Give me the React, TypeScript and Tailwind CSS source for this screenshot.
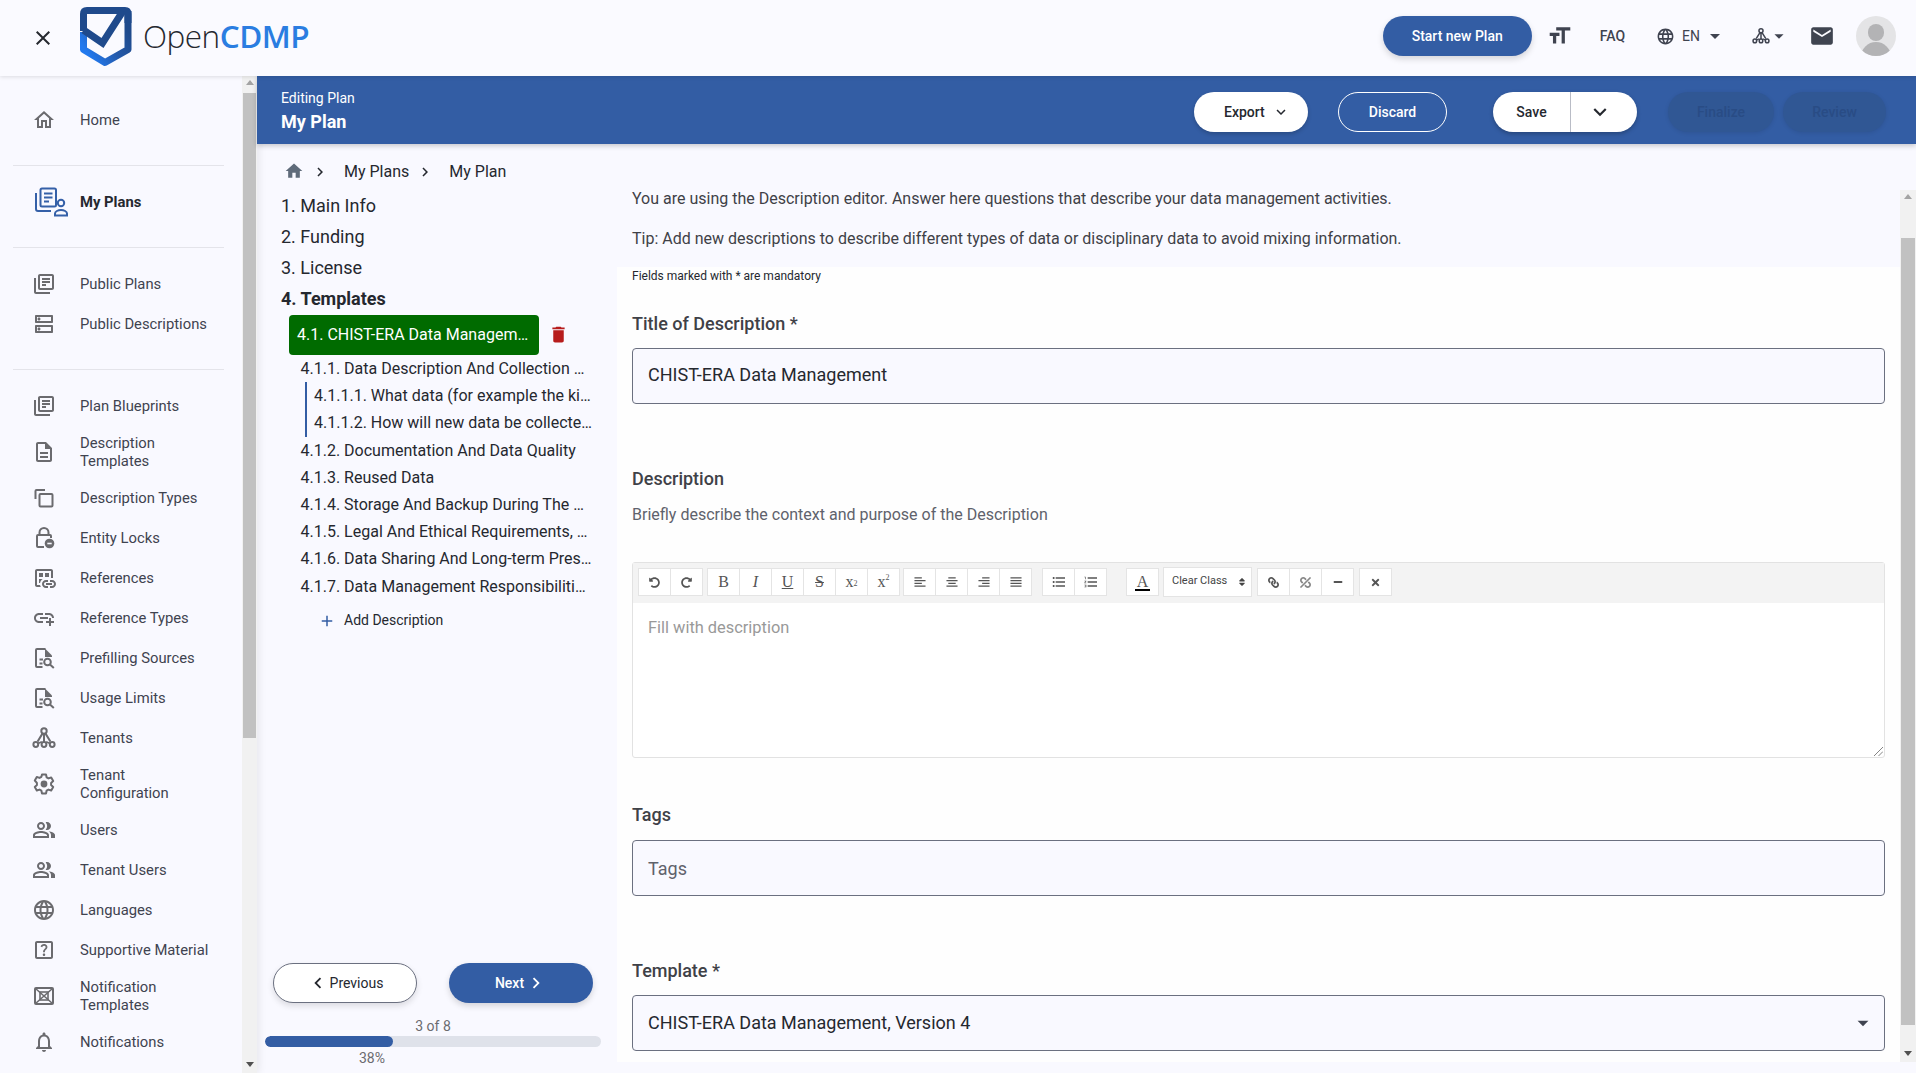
import React from 'react'
import {
  MdClose, MdTextFields, MdLanguage, MdArrowDropDown, MdEmail, MdHome, MdChevronRight, MdChevronLeft,
  MdKeyboardArrowDown, MdDelete, MdAdd, MdOutlineHome, MdOutlineLibraryBooks, MdOutlineDns, MdOutlineDescription,
  MdOutlineDatasetLinked, MdOutlineAddLink, MdOutlinePeopleAlt, MdOutlineNotifications,
  MdOutlineHelpCenter, MdFormatListBulleted, MdFormatListNumbered,
} from 'react-icons/md'
import { FaLink, FaUnlink, FaTimes, FaMinus, FaUndoAlt, FaRedoAlt, FaSort } from 'react-icons/fa'

function Logo() {
  return (
    <svg viewBox="0 -2 70 76" className="h-[76px] w-[70px] shrink-0">
      <defs>
        <linearGradient id="lg" x1="0.1" y1="0.85" x2="0.9" y2="0.25">
          <stop offset="0" stopColor="#2279ee" />
          <stop offset="0.55" stopColor="#2458a8" />
          <stop offset="1" stopColor="#1f4a8c" />
        </linearGradient>
      </defs>
      <path d="M8.5 31V48.5L30 61.5L53 48.5V10" fill="none" stroke="url(#lg)" strokeWidth="7" strokeLinejoin="round" />
      <path d="M8.5 30V13Q8.5 9.5 12 9.5H50Q53 9.5 53 13V22" fill="none" stroke="#1f4a8c" strokeWidth="7" />
      <path d="M8.5 29L27.5 42L48 10" fill="none" stroke="#1f4a8c" strokeWidth="7" />
    </svg>
  )
}

function Tenancy({ className = '' }: { className?: string }) {
  return (
    <svg viewBox="0 0 24 24" className={className} fill="none" stroke="currentColor" strokeWidth="2">
      <circle cx="12" cy="5" r="2.7" />
      <circle cx="3.8" cy="18.5" r="2.4" />
      <circle cx="12" cy="18.5" r="2.4" />
      <circle cx="20.2" cy="18.5" r="2.4" />
      <path d="M10.6 7.4L5.6 15.5M12 8V16M13.4 7.4L18.4 15.5" />
      <path d="M6 17.5L9.8 15.7M18 17.5L14.2 15.7" strokeWidth="1.6" />
    </svg>
  )
}

function LockMinus({ className = '' }: { className?: string }) {
  return (
    <svg viewBox="0 0 24 24" className={className} fill="none" stroke="currentColor" strokeWidth="2">
      <path d="M7.5 9V6.5a4.5 4.5 0 0 1 9 0V9" />
      <path d="M12 21H6a1 1 0 0 1-1-1V10a1 1 0 0 1 1-1h12a1 1 0 0 1 1 1v2" />
      <circle cx="17.5" cy="17.5" r="4.8" fill="currentColor" stroke="none" />
      <path d="M15.3 17.5H19.7" stroke="#f9f9ff" strokeWidth="1.6" />
    </svg>
  )
}

function DocSearch({ className = '' }: { className?: string }) {
  return (
    <svg viewBox="0 0 24 24" className={className} fill="none" stroke="currentColor" strokeWidth="2">
      <path d="M10.5 21H5a1 1 0 0 1-1-1V4a1 1 0 0 1 1-1h8.5" />
      <path d="M13 2.5L20 9.5V11H13Z" fill="currentColor" stroke="none" />
      <path d="M7.5 13.5H11M7.5 17.5H10.5" />
      <circle cx="15.5" cy="16" r="3.3" />
      <path d="M18 18.5L21.8 22" />
    </svg>
  )
}

function Gear({ className = '' }: { className?: string }) {
  return (
    <svg viewBox="0 0 24 24" className={className} fill="none" stroke="currentColor" strokeWidth="2" strokeLinejoin="round">
      <path d="M10 2.5h4l.6 2.8 1.9 1.1 2.7-.9 2 3.5-2.1 1.9v2.2l2.1 1.9-2 3.5-2.7-.9-1.9 1.1-.6 2.8h-4l-.6-2.8-1.9-1.1-2.7.9-2-3.5 2.1-1.9v-2.2L2.8 8.5l2-3.5 2.7.9 1.9-1.1z" />
      <circle cx="12" cy="12" r="3.4" fill="currentColor" stroke="none" />
    </svg>
  )
}

function TemplateBox({ className = '' }: { className?: string }) {
  return (
    <svg viewBox="0 0 24 24" className={className} fill="none" stroke="currentColor" strokeWidth="2">
      <rect x="3" y="4" width="18" height="16" rx="1" />
      <path d="M3.5 4.5L20.5 19.5M20.5 4.5L3.5 19.5" strokeWidth="1.6" />
      <rect x="8" y="8" width="8" height="8" strokeWidth="1.6" />
    </svg>
  )
}

function CopyBox({ className = '' }: { className?: string }) {
  return (
    <svg viewBox="0 0 24 24" className={className} fill="none" stroke="currentColor" strokeWidth="2">
      <path d="M3.5 13V5a1 1 0 0 1 1-1H13" />
      <rect x="7.5" y="8" width="13" height="12.5" rx="1" />
    </svg>
  )
}

function MyPlansIcon() {
  return (
    <svg viewBox="0 0 36 30" className="h-[30px] w-[36px] shrink-0 text-[#3560a8]" fill="none" stroke="currentColor" strokeWidth="2">
      <path d="M2 6V22a2 2 0 0 0 2 2H17" />
      <rect x="6.5" y="1.5" width="15.5" height="18" rx="1.5" />
      <path d="M10 6.5H18.5M10 10.5H18.5M10 14.5H15" />
      <circle cx="27" cy="16" r="3.2" />
      <path d="M21 28.5V26.5c0-2 3-3.5 6-3.5s6 1.5 6 3.5V28.5Z" />
    </svg>
  )
}

const ICON = 'h-[24px] w-[24px] shrink-0'

function NavItem({ Icon, text, tall }: { Icon: React.ComponentType<{ className?: string }>; text: React.ReactNode; tall?: boolean }) {
  return (
    <li className={`flex items-center pl-[32px] text-[14.8px] leading-[18px] text-[#3f4350] ${tall ? 'h-[52px]' : 'h-[40px]'}`}>
      <Icon className={`${ICON} text-[#6b6b6f]`} />
      <span className="ml-[24px]">{text}</span>
    </li>
  )
}

function Divider() {
  return <div className="ml-[13px] w-[211px] border-t border-[#e4e4ea]" />
}

function Sidebar() {
  return (
    <aside className="z-10 flex w-[257px] shrink-0 shadow-[2px_0_8px_rgba(0,0,0,0.08)]">
      <nav className="w-[242px] overflow-hidden pt-[24px]">
        <ul className="pb-[25px]">
          <NavItem Icon={MdOutlineHome} text="Home" />
        </ul>
        <Divider />
        <ul className="pb-[25px] pt-[16px]">
          <li className="flex h-[40px] items-center pl-[34px] text-[14.8px] font-bold text-[#25282f]">
            <MyPlansIcon />
            <span className="ml-[10px]">My Plans</span>
          </li>
        </ul>
        <Divider />
        <ul className="pb-[25px] pt-[16px]">
          <NavItem Icon={MdOutlineLibraryBooks} text="Public Plans" />
          <NavItem Icon={MdOutlineDns} text="Public Descriptions" />
        </ul>
        <Divider />
        <ul className="pt-[16px]">
          <NavItem Icon={MdOutlineLibraryBooks} text="Plan Blueprints" />
          <NavItem Icon={MdOutlineDescription} text={<>Description<br />Templates</>} tall />
          <NavItem Icon={CopyBox} text="Description Types" />
          <NavItem Icon={LockMinus} text="Entity Locks" />
          <NavItem Icon={MdOutlineDatasetLinked} text="References" />
          <NavItem Icon={MdOutlineAddLink} text="Reference Types" />
          <NavItem Icon={DocSearch} text="Prefilling Sources" />
          <NavItem Icon={DocSearch} text="Usage Limits" />
          <NavItem Icon={Tenancy} text="Tenants" />
          <NavItem Icon={Gear} text={<>Tenant<br />Configuration</>} tall />
          <NavItem Icon={MdOutlinePeopleAlt} text="Users" />
          <NavItem Icon={MdOutlinePeopleAlt} text="Tenant Users" />
          <NavItem Icon={MdLanguage} text="Languages" />
          <NavItem Icon={MdOutlineHelpCenter} text="Supportive Material" />
          <NavItem Icon={TemplateBox} text={<>Notification<br />Templates</>} tall />
          <NavItem Icon={MdOutlineNotifications} text="Notifications" />
        </ul>
      </nav>
      <Scrollbar thumbTop={7} thumbHeight={645} width="w-[15px]" />
    </aside>
  )
}

function Scrollbar({ thumbTop, thumbHeight, width }: { thumbTop: number; thumbHeight: number; width: string }) {
  return (
    <div className={`relative flex ${width} shrink-0 flex-col items-center bg-[#f1f1f1]`}>
      <span className="mt-[4px] h-0 w-0 border-x-[4px] border-b-[5px] border-x-transparent border-b-[#a3a3a3]" />
      <div className="absolute inset-x-[1px] bg-[#c1c1c1]" style={{ top: thumbTop + 10, height: thumbHeight }} />
      <span className="mb-[6px] mt-auto h-0 w-0 border-x-[4px] border-t-[5px] border-x-transparent border-t-[#505050]" />
    </div>
  )
}

function TopBar() {
  return (
    <header className="z-20 flex h-[76px] shrink-0 items-center bg-[#fafaff] shadow-[0_1px_4px_rgba(0,0,0,0.12)]">
      <MdClose className="ml-[31px] h-[24px] w-[24px] text-[#25282f]" />
      <div className="-mt-[3px] ml-[20px]"><Logo /></div>
      <span className="-mt-[4px] ml-[-2px] text-[31.5px] tracking-[-0.5px] font-['Open_Sans',sans-serif] font-light text-[#25282f]">
        Open<span className="font-semibold text-[#2a7de1]">CDMP</span>
      </span>
      <div className="-mt-[4px] ml-auto flex items-center pr-[20px] text-[14px] font-medium text-[#3f4350]">
        <button className="h-[40px] w-[149px] rounded-[20px] bg-[#335da4] text-white shadow-[0_3px_6px_rgba(0,0,0,0.15)]">Start new Plan</button>
        <MdTextFields className="ml-[15px] h-[26px] w-[26px] -scale-x-100 text-[#3f4350]" />
        <span className="ml-[27px]">FAQ</span>
        <MdLanguage className="ml-[31px] h-[19px] w-[19px]" />
        <span className="ml-[7px] font-normal">EN</span>
        <MdArrowDropDown className="ml-[3px] h-[24px] w-[24px]" />
        <Tenancy className="ml-[25px] h-[18px] w-[18px]" />
        <MdArrowDropDown className="-ml-[2px] h-[22px] w-[22px]" />
        <MdEmail className="ml-[19px] h-[26px] w-[26px] text-[#3f4450]" />
        <div className="relative ml-[21px] h-[40px] w-[40px] overflow-hidden rounded-full bg-[#e4e4e6]">
          <div className="absolute left-[12px] top-[8px] h-[17px] w-[16px] rounded-full bg-[#b3b3b5]" />
          <div className="absolute left-[5px] top-[26px] h-[24px] w-[30px] rounded-t-full bg-[#b3b3b5]" />
        </div>
      </div>
    </header>
  )
}

function PlanBar() {
  return (
    <div className="z-10 flex h-[68px] shrink-0 items-center bg-[#335da4] pl-[24px] pr-[30px] shadow-[0_2px_5px_rgba(0,0,0,0.2)]">
      <div className="text-white">
        <div className="text-[14px] leading-[20px]">Editing Plan</div>
        <div className="mt-[3px] text-[18px] font-bold leading-[22px]">My Plan</div>
      </div>
      <div className="ml-auto mt-[4px] flex items-center text-[14px] font-medium">
        <button className="flex h-[40px] w-[114px] items-center rounded-[20px] bg-white pl-[30px] text-[#25282f] shadow-[0_2px_4px_rgba(0,0,0,0.2)]">
          Export<MdKeyboardArrowDown className="ml-[7px] h-[18px] w-[18px]" />
        </button>
        <button className="ml-[30px] h-[40px] w-[109px] rounded-[20px] border border-white text-white">Discard</button>
        <div className="ml-[46px] flex h-[40px] w-[144px] items-center rounded-[20px] bg-white text-[#25282f] shadow-[0_2px_4px_rgba(0,0,0,0.25)]">
          <span className="flex h-full w-[78px] items-center justify-center border-r border-[#b9bcc6]">Save</span>
          <MdKeyboardArrowDown className="ml-[16px] h-[26px] w-[26px]" />
        </div>
        <button className="ml-[31px] h-[40px] w-[106px] rounded-[20px] bg-[#305794] text-[#294c85] shadow-[0_1px_4px_rgba(0,0,0,0.1)]">Finalize</button>
        <button className="ml-[9px] h-[40px] w-[103px] rounded-[20px] bg-[#305794] text-[#294c85] shadow-[0_1px_4px_rgba(0,0,0,0.1)]">Review</button>
      </div>
    </div>
  )
}

function SubItem({ text, indent }: { text: string; indent?: boolean }) {
  return (
    <div className={`h-[27.2px] whitespace-nowrap text-[16px] leading-[27.2px] text-[#25282f] ${indent ? 'pl-[7px]' : ''}`}>{text}</div>
  )
}

function StepPane() {
  return (
    <section className="flex w-[360px] shrink-0 flex-col pl-[24px]">
      <div className="mt-[16px] flex h-[24px] items-center text-[16px] text-[#25282f]">
        <MdHome className="ml-[3px] -mt-[2px] h-[20px] w-[20px] text-[#5f6b7a]" />
        <MdChevronRight className="ml-[7px] h-[18px] w-[18px]" />
        <span className="ml-[15px]">My Plans</span>
        <MdChevronRight className="ml-[7px] h-[18px] w-[18px]" />
        <span className="ml-[15px]">My Plan</span>
      </div>
      <ol className="mt-[6px] text-[18px] leading-[31px] text-[#25282f]">
        <li>1. Main Info</li>
        <li>2. Funding</li>
        <li>3. License</li>
        <li className="font-bold">4. Templates</li>
      </ol>
      <div className="ml-[8px] mt-[1px] flex items-center">
        <div className="flex h-[40px] w-[250px] items-center rounded-[4px] bg-[#006b00] pl-[8px] text-[16px] whitespace-nowrap text-white">4.1. CHIST-ERA Data Managem…</div>
        <MdDelete className="ml-[9px] -mt-[1px] h-[21px] w-[21px] text-[#b71c1c]" />
      </div>
      <div className="ml-[19.5px]">
        <SubItem text="4.1.1. Data Description And Collection …" />
        <div className="ml-[4.5px] border-l-2 border-[#335da4]">
          <SubItem indent text="4.1.1.1. What data (for example the ki…" />
          <SubItem indent text="4.1.1.2. How will new data be collecte…" />
        </div>
        <SubItem text="4.1.2. Documentation And Data Quality" />
        <SubItem text="4.1.3. Reused Data" />
        <SubItem text="4.1.4. Storage And Backup During The …" />
        <SubItem text="4.1.5. Legal And Ethical Requirements, …" />
        <SubItem text="4.1.6. Data Sharing And Long-term Pres…" />
        <SubItem text="4.1.7. Data Management Responsibiliti…" />
      </div>
      <div className="ml-[37px] mt-[9px] flex h-[24px] items-center text-[14px] text-[#25282f]">
        <MdAdd className="h-[18px] w-[18px] text-[#335da4]" />
        <span className="ml-[8px]">Add Description</span>
      </div>
      <div className="mt-auto flex">
        <button className="-ml-[8px] flex h-[40px] w-[144px] items-center justify-center rounded-[20px] border border-[#6b7080] bg-white text-[14px] text-[#25282f] shadow-[0_3px_6px_rgba(0,0,0,0.12)]">
          <MdChevronLeft className="mr-[1px] h-[22px] w-[22px]" />Previous
        </button>
        <button className="ml-[32px] flex h-[40px] w-[144px] items-center justify-center rounded-[20px] bg-[#335da4] text-[14px] font-medium text-white shadow-[0_3px_6px_rgba(0,0,0,0.15)]">
          Next<MdChevronRight className="ml-[1px] h-[22px] w-[22px]" />
        </button>
      </div>
      <div className="mt-[14px] w-[336px] -translate-x-[16px] text-center text-[14px] leading-[18px] text-[#6b6b6f]">3 of 8</div>
      <div className="mt-[1px] h-[11px] w-[336px] -translate-x-[16px] overflow-hidden rounded-[6px] bg-[#dfe2ea]">
        <div className="h-full rounded-[6px] bg-[#335da4]" style={{ width: '38%' }} />
      </div>
      <div className="mb-[6px] mt-[2px] w-[120px] -translate-x-[16px] text-right text-[14px] leading-[18px] text-[#6b6b6f]">38%</div>
    </section>
  )
}

function ToolBtn({ children, className = '' }: { children?: React.ReactNode; className?: string }) {
  return (
    <span className={`-ml-px flex h-[28px] w-[33px] items-center justify-center border border-[#e4e4e4] bg-white text-[#555] first:ml-0 ${className}`}>
      {children}
    </span>
  )
}

function AlignIcon({ kind }: { kind: 'left' | 'center' | 'right' | 'full' }) {
  const s = {
    left: 'M1 2H9M1 5H13M1 8H9M1 11H13',
    center: 'M3 2H11M1 5H13M3 8H11M1 11H13',
    right: 'M5 2H13M1 5H13M5 8H13M1 11H13',
    full: 'M1 2H13M1 5H13M1 8H13M1 11H13',
  }[kind]
  return (
    <svg viewBox="0 0 14 13" className="h-[12px] w-[14px]" stroke="currentColor" strokeWidth="1.4" fill="none">
      <path d={s} />
    </svg>
  )
}

function Editor() {
  const serif = "font-['Liberation_Serif',serif] text-[16px]"
  return (
    <div className="mt-[35px] h-[196px] rounded-[3px] border border-[#e2e2e2] bg-white">
      <div className="flex h-[40px] items-center bg-[#f3f3f3] pb-[2px] pl-[5px] text-[13px]">
        <div className="flex">
          <ToolBtn><FaUndoAlt className="h-[11px] w-[11px]" /></ToolBtn>
          <ToolBtn><FaRedoAlt className="h-[11px] w-[11px]" /></ToolBtn>
        </div>
        <div className="ml-[4px] flex">
          <ToolBtn className={serif}>B</ToolBtn>
          <ToolBtn className={`${serif} italic`}>I</ToolBtn>
          <ToolBtn className={`${serif} underline`}>U</ToolBtn>
          <ToolBtn className={`${serif} line-through`}>S</ToolBtn>
          <ToolBtn className={`${serif} text-[14px]`}>x<sub className="text-[8px]">2</sub></ToolBtn>
          <ToolBtn className={`${serif} text-[14px]`}>x<sup className="text-[8px]">2</sup></ToolBtn>
        </div>
        <div className="ml-[3px] flex">
          <ToolBtn><AlignIcon kind="left" /></ToolBtn>
          <ToolBtn><AlignIcon kind="center" /></ToolBtn>
          <ToolBtn><AlignIcon kind="right" /></ToolBtn>
          <ToolBtn><AlignIcon kind="full" /></ToolBtn>
        </div>
        <div className="ml-[10px] flex">
          <ToolBtn><MdFormatListBulleted className="h-[16px] w-[16px]" /></ToolBtn>
          <ToolBtn><MdFormatListNumbered className="h-[16px] w-[16px]" /></ToolBtn>
        </div>
        <div className="ml-[19px] flex">
          <ToolBtn className={serif}>
            <span className="border-b-2 border-black px-[2px] leading-[15px]">A</span>
          </ToolBtn>
        </div>
        <span className="ml-[4px] flex h-[30px] w-[89px] items-center justify-between border border-[#e4e4e4] bg-white pl-[8px] pr-[5px] text-[11px] text-[#444]">
          <span className="-mt-[2px]">Clear Class</span>
          <FaSort className="h-[10px] w-[8px]" />
        </span>
        <div className="ml-[5px] flex">
          <ToolBtn className="bg-[#f3f3f3]"><FaLink className="h-[11px] w-[11px] -scale-x-100" /></ToolBtn>
          <ToolBtn className="bg-[#f3f3f3]"><FaUnlink className="h-[11px] w-[11px] -scale-x-100 text-[#888]" /></ToolBtn>
          <ToolBtn><FaMinus className="h-[10px] w-[10px]" /></ToolBtn>
        </div>
        <div className="ml-[5px] flex">
          <ToolBtn><FaTimes className="h-[11px] w-[11px]" /></ToolBtn>
        </div>
      </div>
      <div className="relative h-[154px] pl-[15px] pt-[13px] text-[16.4px] leading-[24px] text-[#999]">
        Fill with description
        <svg viewBox="0 0 10 10" className="absolute bottom-[1px] right-[1px] h-[9px] w-[9px]" stroke="#777" strokeWidth="1" fill="none">
          <path d="M0 10L10 0M5 10L10 5" />
        </svg>
      </div>
    </div>
  )
}

function Field({ children, muted, select, className = '' }: { children: React.ReactNode; muted?: boolean; select?: boolean; className?: string }) {
  return (
    <div className={`flex h-[56px] items-center rounded-[4px] border border-[#6b7080] bg-[#f9f9ff] pl-[15px] pr-[8px] text-[18px] ${muted ? 'text-[#5f626c]' : 'text-[#25282f]'} ${className}`}>
      {children}
      {select && <MdArrowDropDown className="ml-auto h-[26px] w-[26px] text-[#3f4350]" />}
    </div>
  )
}

function Label({ children, className = '' }: { children: React.ReactNode; className?: string }) {
  return <div className={`text-[18px] font-medium leading-[24px] text-[#3f4147] ${className}`}>{children}</div>
}

function FormPane() {
  return (
    <section className="flex min-w-0 flex-1">
      <div className="flex min-w-0 flex-1 flex-col">
        <div className="h-[123px] shrink-0 pl-[15px] pt-[43px] text-[16px] leading-[24px] text-[#3f4147]">
          <p>You are using the Description editor. Answer here questions that describe your data management activities.</p>
          <p className="mt-[16px]">Tip: Add new descriptions to describe different types of data or disciplinary data to avoid mixing information.</p>
        </div>
        <div className="mb-[11px] flex-1 overflow-hidden bg-[#fefefe] px-[15px] pt-[1px]">
          <div className="text-[12px] leading-[16px] text-[#25282f]">Fields marked with * are mandatory</div>
          <Label className="mt-[28px]">Title of Description *</Label>
          <div className="mt-[12px]"><Field className="pb-[3px]">CHIST-ERA Data Management</Field></div>
          <Label className="mt-[63px]">Description</Label>
          <div className="mt-[12px] text-[16px] leading-[24px] text-[#5f626c]">Briefly describe the context and purpose of the Description</div>
          <Editor />
          <Label className="mt-[45px]">Tags</Label>
          <div className="mt-[13px]"><Field muted>Tags</Field></div>
          <Label className="mt-[63px]">Template *</Label>
          <div className="mt-[12px]"><Field select className="pb-[1px]">CHIST-ERA Data Management, Version 4</Field></div>
        </div>
      </div>
      <div className="mb-[11px] mt-[46px] flex">
        <Scrollbar thumbTop={38} thumbHeight={787} width="w-[16px]" />
      </div>
    </section>
  )
}

export default function App() {
  return (
    <div className="flex h-screen w-screen flex-col overflow-hidden bg-[#f9f9ff] font-['Roboto',sans-serif]">
      <TopBar />
      <div className="flex min-h-0 flex-1">
        <Sidebar />
        <main className="flex min-w-0 flex-1 flex-col">
          <PlanBar />
          <div className="flex min-h-0 flex-1">
            <StepPane />
            <FormPane />
          </div>
        </main>
      </div>
    </div>
  )
}
